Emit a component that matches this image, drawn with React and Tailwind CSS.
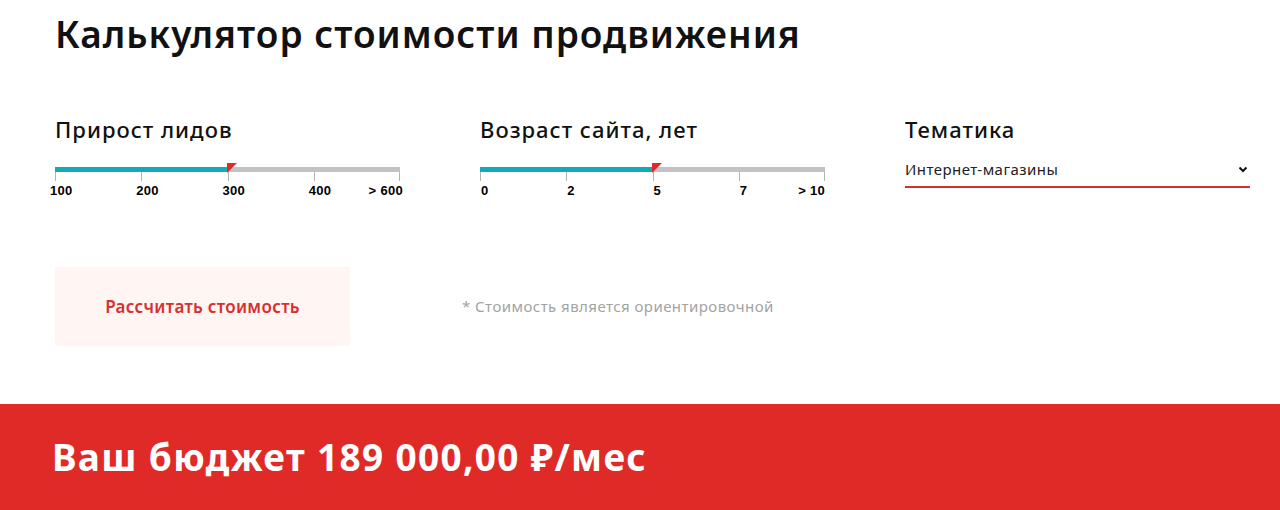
import React from "react";

const font = { fontFamily: '"Noto Sans", "Open Sans", sans-serif' };

function Slider({ labels, value, offset, lastRight }) {
  const pct = value * 100;
  return (
    <div className="relative h-[40px] w-full">
      <div className="absolute left-0 right-0 top-[2px] h-[5px] bg-[#c2c2c2]" />
      <div className="absolute left-0 top-[2px] h-[5px] bg-[#0fabb8]" style={{ width: pct + "%" }} />
      {labels.map((l, i) => {
        const p = (i / (labels.length - 1)) * 100;
        const last = i === labels.length - 1;
        return (
          <React.Fragment key={i}>
            <div className="absolute top-[7px] h-[9px] w-px bg-[#b5b5b5]" style={{ left: `calc(${p}% - ${last ? 1 : 0}px)` }} />
            <div
              className="absolute top-[18px] text-[13px] font-bold leading-[15px] text-black whitespace-nowrap tracking-[0.3px]"
              style={{
                fontFamily: '"Liberation Sans", Arial, sans-serif',
                ...(last ? { right: `${lastRight}px` } : { left: `calc(${p}% - ${offset}px)` }),
              }}
            >
              {l}
            </div>
          </React.Fragment>
        );
      })}
      <svg className="absolute top-[-2px]" width="10" height="10" viewBox="0 0 10 10" style={{ left: `calc(${pct}% - 1px)` }}>
        <polygon points="0,0 10,0 0,10" fill="#dd2a2a" />
      </svg>
    </div>
  );
}

export default function App() {
  return (
    <div className="w-[1280px] h-[510px] bg-white overflow-hidden" style={font}>
      <div className="pl-[55px] pr-[30px] pt-[12px]">
        <h1 className="text-[37px] font-semibold leading-[44px] text-[#111] tracking-[1px]">Калькулятор стоимости продвижения</h1>
        <div className="mt-[58px] grid grid-cols-[345px_345px_345px] gap-x-[80px]">
          <div>
            <div className="text-[22px] font-medium leading-[30px] text-[#111] tracking-[1px]">Прирост лидов</div>
            <div className="mt-[21px]">
              <Slider labels={["100", "200", "300", "400", "> 600"]} value={0.5} offset={5} lastRight={-3} />
            </div>
          </div>
          <div>
            <div className="text-[22px] font-medium leading-[30px] text-[#111] tracking-[1px]">Возраст сайта, лет</div>
            <div className="mt-[21px]">
              <Slider labels={["0", "2", "5", "7", "> 10"]} value={0.5} offset={-1} lastRight={0} />
            </div>
          </div>
          <div>
            <div className="text-[22px] font-medium leading-[30px] text-[#111] tracking-[1px]">Тематика</div>
            <div className="mt-[8px] flex h-[36px] items-center justify-between border-b-2 border-[#d32f2f] pr-[2px]">
              <span className="text-[15px] text-[#222] tracking-[0.45px]">Интернет-магазины</span>
              <svg width="10" height="7" viewBox="0 0 10 7">
                <polyline points="1.5,1.5 5,5 8.5,1.5" fill="none" stroke="#111" strokeWidth="2" />
              </svg>
            </div>
          </div>
        </div>
        <div className="mt-[62px] flex items-center">
          <button className="flex h-[79px] w-[295px] items-center justify-center bg-[#fff5f3] text-[17px] font-semibold text-[#d63030] tracking-[0.3px]">
            Рассчитать стоимость
          </button>
          <div className="ml-[112px] text-[15px] text-[#a3a3a3] tracking-[0.45px]">* Стоимость является ориентировочной</div>
        </div>
      </div>
      <div className="mt-[58px] flex h-[106px] items-center bg-[#df2a28] pl-[52px]">
        <div className="text-[37px] font-bold text-white tracking-[1.35px]">Ваш бюджет 189 000,00 ₽/мес</div>
      </div>
    </div>
  );
}
